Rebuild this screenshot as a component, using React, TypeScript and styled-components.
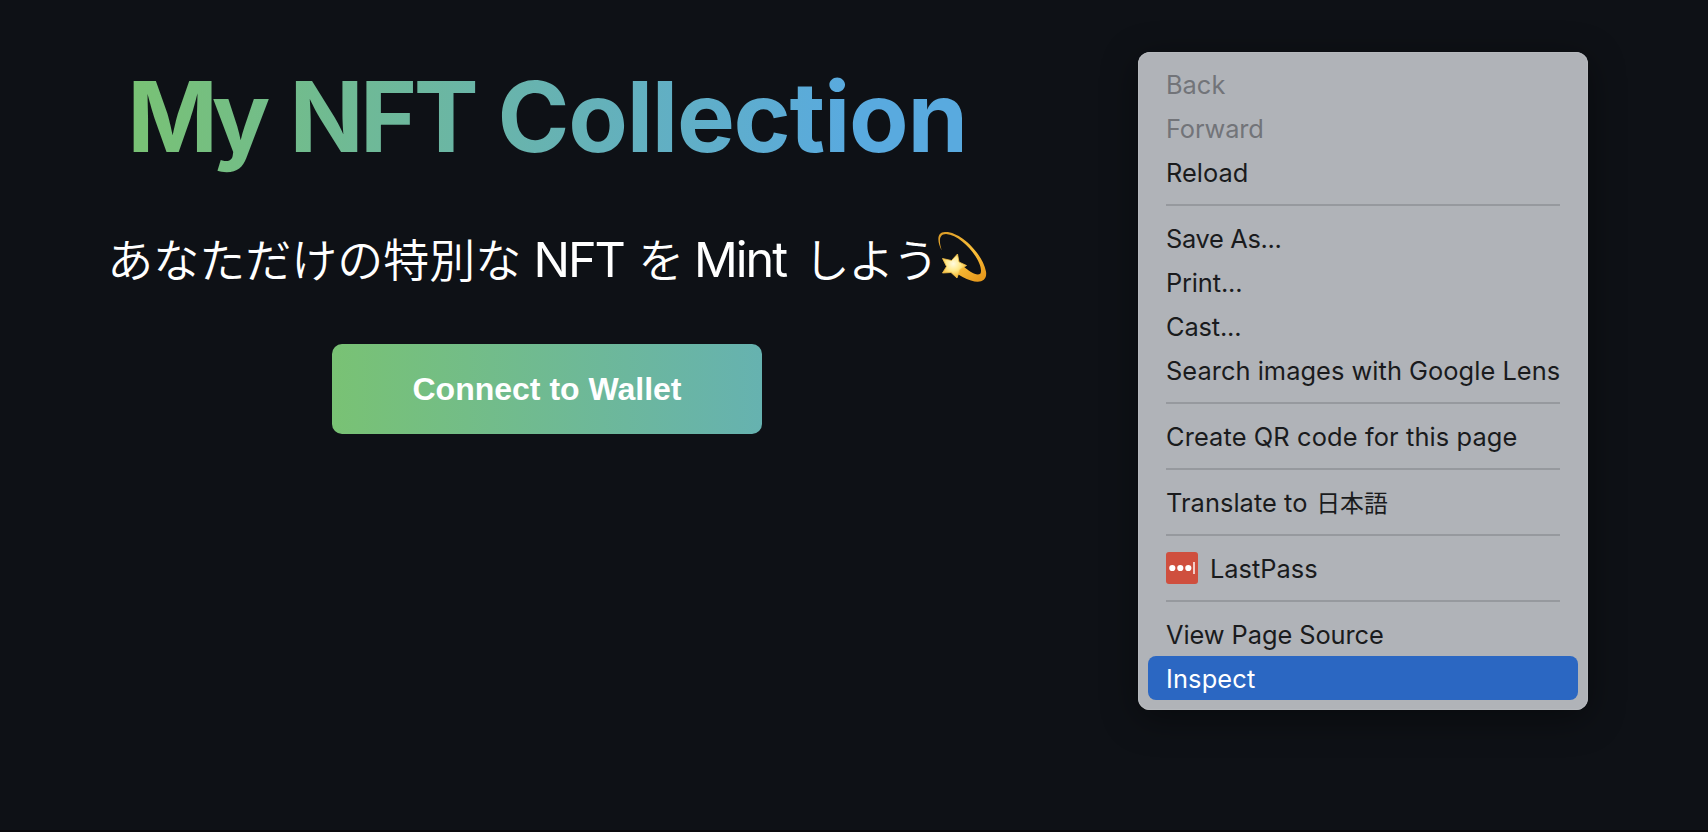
import React from "react";
import styled, { createGlobalStyle } from "styled-components";

const GlobalStyle = createGlobalStyle`
  * { box-sizing: border-box; }
  body { margin: 0; background: #0e1116; }
`;

const Page = styled.main`
  display: flex;
  align-items: flex-start;
  width: 1708px;
  height: 832px;
  overflow: hidden;
  background: #0e1116;
  border-bottom: 2px solid #0a090d;
  font-family: Inter, "Noto Sans CJK JP", sans-serif;
`;

const Hero = styled.section`
  display: flex;
  flex-direction: column;
  align-items: center;
  width: 1094px;
  padding-top: 58px;
`;

const Title = styled.h1`
  margin: 0;
  font-size: 97.3px;
  line-height: 118px;
  font-weight: 680;
  white-space: nowrap;
  color: transparent;
  background: linear-gradient(to right, #79c274 0%, #66b2b4 52%, #59aadf 86%);
  background-clip: text;
`;

const Word = styled.span<{ $tracking: number }>`
  letter-spacing: ${(p) => p.$tracking}px;
`;

const Subtitle = styled.p`
  display: flex;
  align-items: baseline;
  height: 60px;
  margin: 51px 0 3px;
  color: #fff;
  font-size: 48.5px;
  line-height: 60px;
  white-space: pre;
`;

const Kana = styled.span<{ $tracking?: number }>`
  font-family: "Noto Sans CJK JP", sans-serif;
  font-size: 46px;
  font-weight: 350;
  line-height: 60px;
  letter-spacing: ${(p) => p.$tracking ?? 0}px;
`;

const Latin = styled.span<{ $before: number; $after: number }>`
  margin: 0 ${(p) => p.$after}px 0 ${(p) => p.$before}px;
  letter-spacing: -2px;
`;

const DizzyStar = styled.svg`
  flex: none;
  width: 50px;
  height: 52px;
  margin: 4px 0 0 -0.5px;
  align-self: flex-start;
`;

const ConnectButton = styled.button`
  width: 430px;
  height: 90px;
  margin-top: 54px;
  padding: 0;
  border: 0;
  border-radius: 10px;
  background: linear-gradient(to right, #79c274, #66b2b0);
  color: #fff;
  font: 700 32px/90px "Liberation Sans", Arial, sans-serif;
`;

const Menu = styled.nav`
  display: flex;
  flex-direction: column;
  width: 450px;
  margin: 52px 0 0 44px;
  padding: 10px;
  border-radius: 12px;
  background: #b0b3b8;
  box-shadow: inset 0 0 0 1px #b6b9bd, 0 8px 36px rgba(0, 0, 0, 0.4);
`;

const MenuItem = styled.div<{ $state?: "disabled" | "active" }>`
  display: flex;
  align-items: center;
  gap: 12px;
  height: 44px;
  padding: 0 18px;
  border-radius: 8px;
  background: ${(p) => (p.$state === "active" ? "#2b67c2" : "transparent")};
  color: ${(p) => (p.$state === "active" ? "#fff" : p.$state === "disabled" ? "#727479" : "#1a1b1d")};
`;

const Label = styled.span<{ $tracking?: number }>`
  padding-top: 2px;
  font-size: 25.4px;
  line-height: 42px;
  letter-spacing: ${(p) => p.$tracking ?? 0}px;
  white-space: nowrap;
`;

const Kanji = styled.span`
  margin-left: 1.5px;
  font-family: "Noto Sans CJK JP", sans-serif;
  font-size: 23.9px;
  font-weight: 400;
  line-height: 1;
`;

const Separator = styled.hr`
  width: 394px;
  height: 2px;
  margin: 10px 18px;
  border: 0;
  background: #96999e;
`;

const Dots = styled.svg`
  width: 32px;
  height: 32px;
`;

function LastPassIcon() {
  return (
    <Dots viewBox="0 0 32 32">
      <rect width="32" height="32" rx="3" fill="#cf4f3e" />
      <circle cx="6.3" cy="16" r="3.1" fill="#fff" />
      <circle cx="14.3" cy="16" r="3.1" fill="#fff" />
      <circle cx="22.3" cy="16" r="3.1" fill="#fff" />
      <rect x="27" y="10" width="2" height="12" fill="#f3cdc8" />
    </Dots>
  );
}

function Dizzy() {
  return (
    <DizzyStar viewBox="0 0 50 52" role="img" aria-label="dizzy">
      <defs>
        <linearGradient id="trail" x1="0" y1="0" x2="0.8" y2="1">
          <stop offset="0" stopColor="#d99a26" />
          <stop offset="0.6" stopColor="#fbc03a" />
          <stop offset="1" stopColor="#e79a1d" />
        </linearGradient>
        <radialGradient id="star" cx="0.45" cy="0.4" r="0.6">
          <stop offset="0" stopColor="#fffbe0" />
          <stop offset="0.5" stopColor="#ffe98a" />
          <stop offset="1" stopColor="#f4b32a" />
        </radialGradient>
      </defs>
      <path
        d="M4.800 19.500 C0 11 -0.500 1 8 1 C22 0 45 21 49 40.500 C50.500 50 43 52.500 34 49.500 C28 47.500 23 45 18 41 L26 35 C33 41 40 45.500 43.500 42.500 C47.500 33 27 4.500 9 3 C1.500 3 2 11 4.800 19.500 Z"
        fill="url(#trail)"
      />
      <path
        d="M20.500 23 L22 31 L29.500 34.500 L23 38.500 L20 47 L14 41.500 L5.500 42 L9.500 35.500 L5.500 27.500 L14.500 29.500 Z"
        fill="url(#star)"
        stroke="#f4c14a"
        strokeWidth="0.8"
        strokeLinejoin="round"
      />
    </DizzyStar>
  );
}

export default function App() {
  return (
    <>
      <GlobalStyle />
      <Page>
        <Hero>
          <Title>
            <Word $tracking={-7}>My</Word>
            <Word $tracking={3}> </Word>
            <Word $tracking={-3.5}>NFT</Word>
            <Word $tracking={-0.7}> </Word>
            <Word $tracking={-1.25}>Collection</Word>
          </Title>
          <Subtitle>
            <Kana>あなただけの特別な</Kana>
            <Latin $before={0.5} $after={2.8}> NFT </Latin>
            <Kana>を</Kana>
            <Latin $before={-2} $after={6}> Mint </Latin>
            <Kana $tracking={-1.5}>しよう</Kana>
            <Dizzy />
          </Subtitle>
          <ConnectButton>Connect to Wallet</ConnectButton>
        </Hero>
        <Menu>
          <MenuItem $state="disabled"><Label>Back</Label></MenuItem>
          <MenuItem $state="disabled"><Label $tracking={-0.15}>Forward</Label></MenuItem>
          <MenuItem><Label>Reload</Label></MenuItem>
          <Separator />
          <MenuItem><Label $tracking={-0.33}>Save As...</Label></MenuItem>
          <MenuItem><Label $tracking={-0.15}>Print...</Label></MenuItem>
          <MenuItem><Label $tracking={-0.15}>Cast...</Label></MenuItem>
          <MenuItem><Label $tracking={0.04}>Search images with Google Lens</Label></MenuItem>
          <Separator />
          <MenuItem><Label $tracking={0.12}>Create QR code for this page</Label></MenuItem>
          <Separator />
          <MenuItem><Label $tracking={0.05}>Translate to <Kanji>日本語</Kanji></Label></MenuItem>
          <Separator />
          <MenuItem><LastPassIcon /><Label>LastPass</Label></MenuItem>
          <Separator />
          <MenuItem><Label $tracking={-0.07}>View Page Source</Label></MenuItem>
          <MenuItem $state="active"><Label $tracking={0.15}>Inspect</Label></MenuItem>
        </Menu>
      </Page>
    </>
  );
}
